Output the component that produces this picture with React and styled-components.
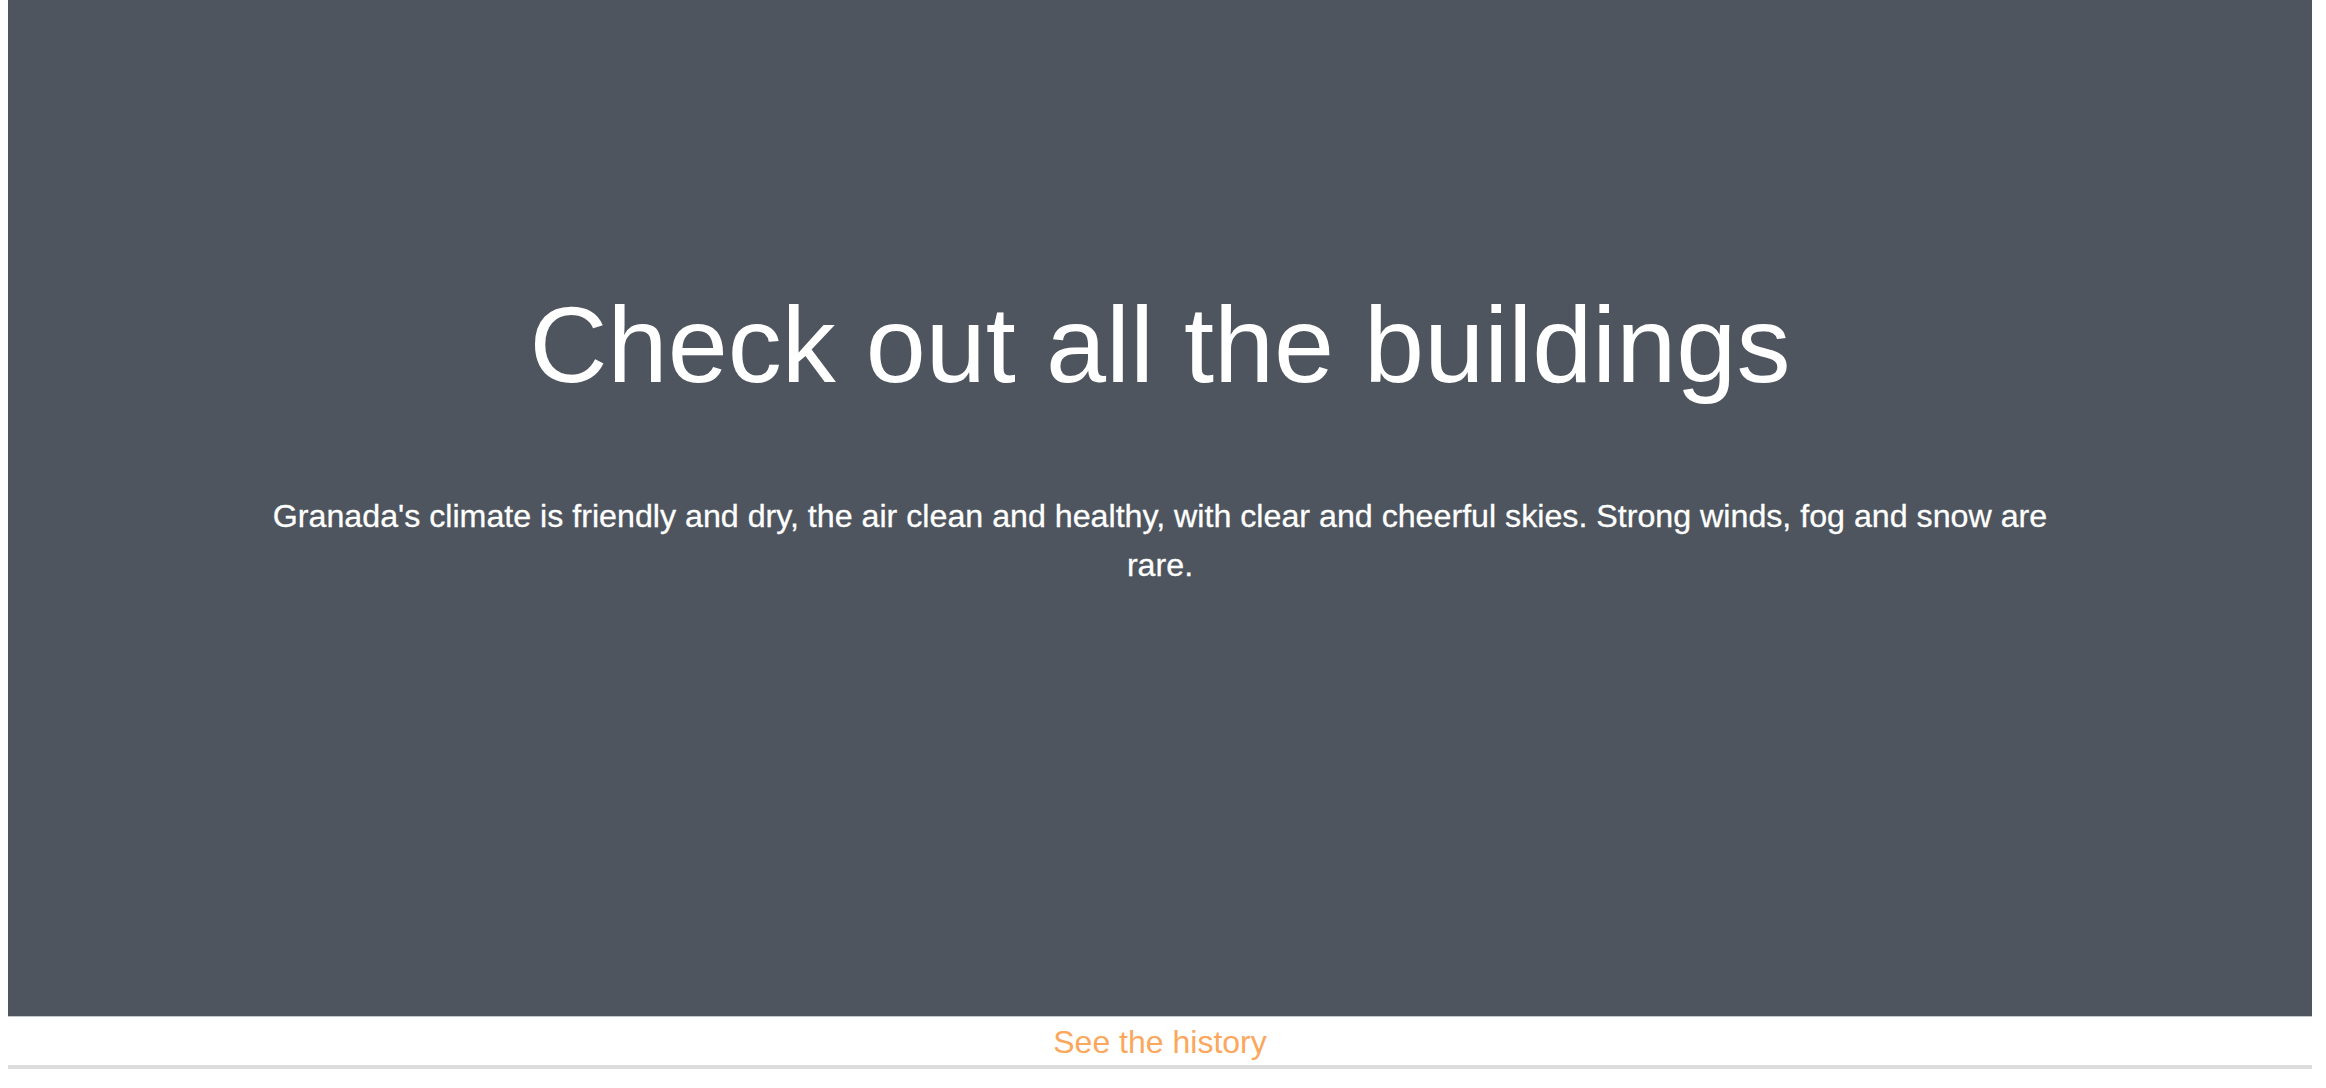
import React from 'react';
import styled, { createGlobalStyle } from 'styled-components';

const GlobalStyle = createGlobalStyle`
  body {
    margin: 0;
    background: #ffffff;
    font-family: 'Liberation Sans', Arial, Helvetica, sans-serif;
  }
`;

const Page = styled.div`
  width: 2304px;
  margin: 0 8px;
`;

const Hero = styled.section`
  height: 1017px;
  box-sizing: border-box;
  background-color: #4e555e;
  border-bottom: 1px solid #c3c8ce;
  padding-top: 280px;
  display: flex;
  flex-direction: column;
  align-items: center;
  text-align: center;
  color: #ffffff;
`;

const Title = styled.h1`
  font-size: 108px;
  font-weight: 400;
  line-height: 130px;
  margin: 0 0 82px;
`;

const Lead = styled.p`
  font-size: 32.2px;
  line-height: 49px;
  max-width: 1810px;
  margin: 0;
  -webkit-text-stroke: 0.3px #ffffff;
`;

const HistoryBar = styled.div`
  padding: 5px 0 3px;
  text-align: center;
  border-bottom: 4px solid #dcdcdc;
`;

const HistoryLink = styled.a`
  font-size: 32px;
  line-height: 40px;
  color: #fba75c;
  text-decoration: none;
  cursor: pointer;
`;

const App = () => {
  return (
    <>
      <GlobalStyle />
      <Page>
        <Hero>
          <Title>Check out all the buildings</Title>
          <Lead>
            Granada's climate is friendly and dry, the air clean and healthy, with clear and cheerful skies. Strong winds, fog and snow are rare.
          </Lead>
        </Hero>
        <HistoryBar>
          <HistoryLink href="#history">See the history</HistoryLink>
        </HistoryBar>
      </Page>
    </>
  );
};

export default App;
